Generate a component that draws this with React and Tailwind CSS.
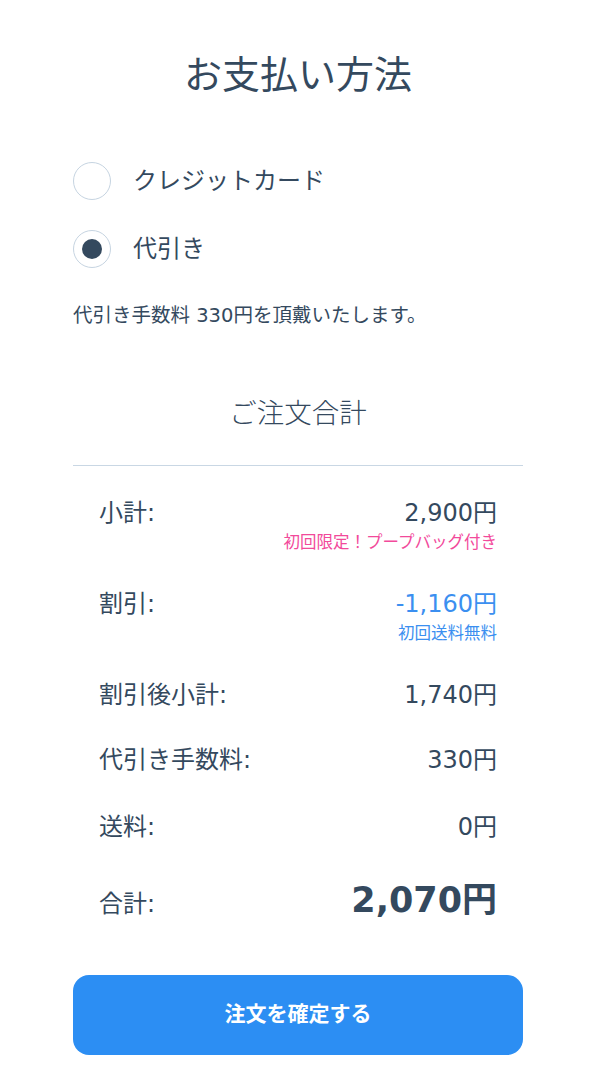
import React, { useState } from "react";

const FONT = { fontFamily: '"DejaVu Sans", "Noto Sans CJK JP", sans-serif' };

const rows = [
  { label: "小計:", value: "2,900円", note: "初回限定！プープバッグ付き", tone: "pink", gap: "" },
  { label: "割引:", value: "-1,160円", note: "初回送料無料", tone: "blue", gap: "mt-[33px]" },
  { label: "割引後小計:", value: "1,740円", gap: "mt-[33px]" },
  { label: "代引き手数料:", value: "330円", gap: "mt-[32px]" },
  { label: "送料:", value: "0円", gap: "mt-[34px]" },
];

const Radio = ({ checked, label, onClick }) => (
  <button onClick={onClick} className="flex items-center gap-[22px] text-left">
    <span className="w-[38px] h-[38px] rounded-full border border-[#c6d4e1] flex items-center justify-center">
      {checked && <span className="w-[20px] h-[20px] rounded-full bg-[#34495e]"></span>}
    </span>
    <span className="text-[24px] leading-[34px] text-[#34495e]">{label}</span>
  </button>
);

export default function App() {
  const [method, setMethod] = useState("cod");

  return (
    <div className="min-h-screen bg-white" style={FONT}>
      <div className="w-[450px] mx-auto flex flex-col text-[#34495e]">
        <h1 className="pt-[48px] text-[38px] leading-[54px] text-center">お支払い方法</h1>

        {/* Payment options */}
        <div className="mt-[60px] flex flex-col gap-[30px]">
          <Radio label="クレジットカード" checked={method === "card"} onClick={() => setMethod("card")} />
          <Radio label="代引き" checked={method === "cod"} onClick={() => setMethod("cod")} />
        </div>

        <p className="mt-[34px] text-[19.5px] leading-[27px] whitespace-nowrap">代引き手数料 330円を頂戴いたします。</p>

        {/* Order summary */}
        <h2 className="mt-[65px] text-[27.5px] leading-[39px] text-center font-light">ご注文合計</h2>
        <div className="mt-[32px] h-px bg-[#c9d7e4]"></div>

        <div className="px-[26px] pt-[31px] flex flex-col">
          {rows.map((row, idx) => (
            <div key={idx} className={row.gap}>
              <div className="flex justify-between items-center text-[24px] leading-[33px]">
                <span>{row.label}</span>
                <span className={row.tone === "blue" ? "text-[#3b8ff0]" : ""}>{row.value}</span>
              </div>
              {row.note && (
                <div
                  className={`mt-[1px] text-right text-[16.5px] leading-[24px] whitespace-nowrap ${
                    row.tone === "pink" ? "text-[#f24a9b]" : "text-[#3b8ff0]"
                  }`}
                >
                  {row.note}
                </div>
              )}
            </div>
          ))}

          <div className="mt-[34px] flex justify-between items-baseline">
            <span className="text-[24px] leading-[33px]">合計:</span>
            <span className="text-[35px] leading-[44px] font-bold">2,070円</span>
          </div>
        </div>

        <button className="mt-[53px] h-[80px] rounded-[16px] bg-[#2c8ef3] text-white text-[21px] font-bold">
          注文を確定する
        </button>
      </div>
    </div>
  );
}
